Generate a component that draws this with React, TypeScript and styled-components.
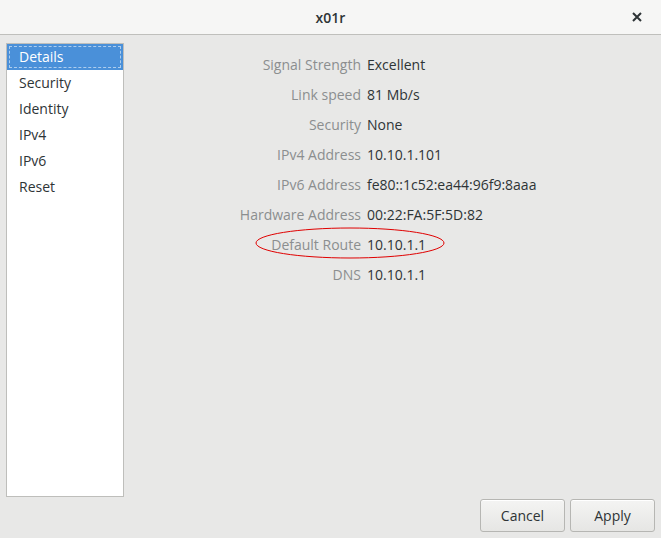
import { Fragment } from 'react';
import styled, { createGlobalStyle } from 'styled-components';

const GlobalStyle = createGlobalStyle`
  html, body {
    margin: 0;
    padding: 0;
    background: #e8e8e7;
  }
  body {
    font-family: 'Open Sans', 'Noto Sans', sans-serif;
    font-size: 14px;
    color: #2e3436;
  }
`;

/** style Start */
const Window = styled.div`
  width: 661px;
  height: 538px;
  display: flex;
  flex-direction: column;
  background: #e8e8e7;
  overflow: hidden;
`;

const TitleBar = styled.header`
  height: 34px;
  flex-shrink: 0;
  background: #f6f6f5;
  border-bottom: 1px solid #bfbfbc;
  display: grid;
  grid-template-columns: 1fr auto 1fr;
  align-items: center;
`;

const Title = styled.h1`
  grid-column: 2;
  margin: 0;
  font-size: 14px;
  font-weight: 600;
  color: #2e3436;
`;

const CloseButton = styled.button`
  justify-self: end;
  margin-right: 14px;
  width: 20px;
  height: 20px;
  padding: 0;
  border: 0;
  background: transparent;
  display: flex;
  align-items: center;
  justify-content: center;
`;

const Body = styled.div`
  flex: 1;
  display: flex;
  padding: 8px 6px 0 6px;
  min-height: 0;
`;

const Sidebar = styled.ul`
  list-style: none;
  margin: 0 0 41px 0;
  padding: 0;
  width: 116px;
  background: #ffffff;
  border: 1px solid #bebebb;
`;

const SidebarItem = styled.li<{ $active?: boolean }>`
  position: relative;
  height: 26px;
  line-height: 26px;
  padding-left: 12px;
  background: ${(p) => (p.$active ? '#4a90d9' : 'transparent')};
  color: ${(p) => (p.$active ? '#ffffff' : '#2e3436')};
  &::after {
    content: '';
    display: ${(p) => (p.$active ? 'block' : 'none')};
    position: absolute;
    inset: 2px;
    border: 1px dashed rgba(255, 255, 255, 0.55);
  }
`;

const Main = styled.section`
  flex: 1;
  display: flex;
  flex-direction: column;
`;

const InfoGrid = styled.dl`
  position: relative;
  margin: 6px 0 0 0;
  display: grid;
  grid-template-columns: 237px auto;
  column-gap: 6px;
  grid-auto-rows: 30px;
  align-items: center;
`;

const Label = styled.dt`
  text-align: right;
  color: #8b8e8f;
`;

const Value = styled.dd`
  margin: 0;
  color: #2e3436;
`;

const Highlight = styled.svg`
  position: absolute;
  left: 131px;
  top: 178px;
  pointer-events: none;
`;

const Footer = styled.div`
  margin-top: auto;
  display: flex;
  justify-content: flex-end;
  gap: 5px;
  padding-bottom: 6px;
`;

const Button = styled.button`
  width: 85px;
  height: 33px;
  font-family: inherit;
  font-size: 14px;
  color: #2e3436;
  border: 1px solid #b6b6b3;
  border-radius: 3px;
  background: linear-gradient(#f4f4f3, #e6e6e4);
  box-shadow: inset 0 1px #ffffff;
`;
/** style End */

interface InfoRow {
  label: string;
  value: string;
}

const menu = ['Details', 'Security', 'Identity', 'IPv4', 'IPv6', 'Reset'];

const rows: InfoRow[] = [
  { label: 'Signal Strength', value: 'Excellent' },
  { label: 'Link speed', value: '81 Mb/s' },
  { label: 'Security', value: 'None' },
  { label: 'IPv4 Address', value: '10.10.1.101' },
  { label: 'IPv6 Address', value: 'fe80::1c52:ea44:96f9:8aaa' },
  { label: 'Hardware Address', value: '00:22:FA:5F:5D:82' },
  { label: 'Default Route', value: '10.10.1.1' },
  { label: 'DNS', value: '10.10.1.1' },
];

function App() {
  return (
    <Window>
      <GlobalStyle />
      <TitleBar>
        <Title>x01r</Title>
        <CloseButton aria-label="close">
          <svg width="10" height="10" viewBox="0 0 10 10">
            <path d="M1 1L9 9M9 1L1 9" stroke="#2e3436" strokeWidth="2" />
          </svg>
        </CloseButton>
      </TitleBar>
      <Body>
        <Sidebar>
          {menu.map((item) => (
            <SidebarItem key={item} $active={item === 'Details'}>
              {item}
            </SidebarItem>
          ))}
        </Sidebar>
        <Main>
          <InfoGrid>
            {rows.map((row) => (
              <Fragment key={row.label}>
                <Label>{row.label}</Label>
                <Value>{row.value}</Value>
              </Fragment>
            ))}
            {/* 빨간 동그라미 표시 */}
            <Highlight width="190" height="32" viewBox="0 0 190 32">
              <ellipse cx="95" cy="16" rx="94" ry="15" fill="none" stroke="#e00000" strokeWidth="1" />
            </Highlight>
          </InfoGrid>
          <Footer>
            <Button>Cancel</Button>
            <Button>Apply</Button>
          </Footer>
        </Main>
      </Body>
    </Window>
  );
}

export default App;
